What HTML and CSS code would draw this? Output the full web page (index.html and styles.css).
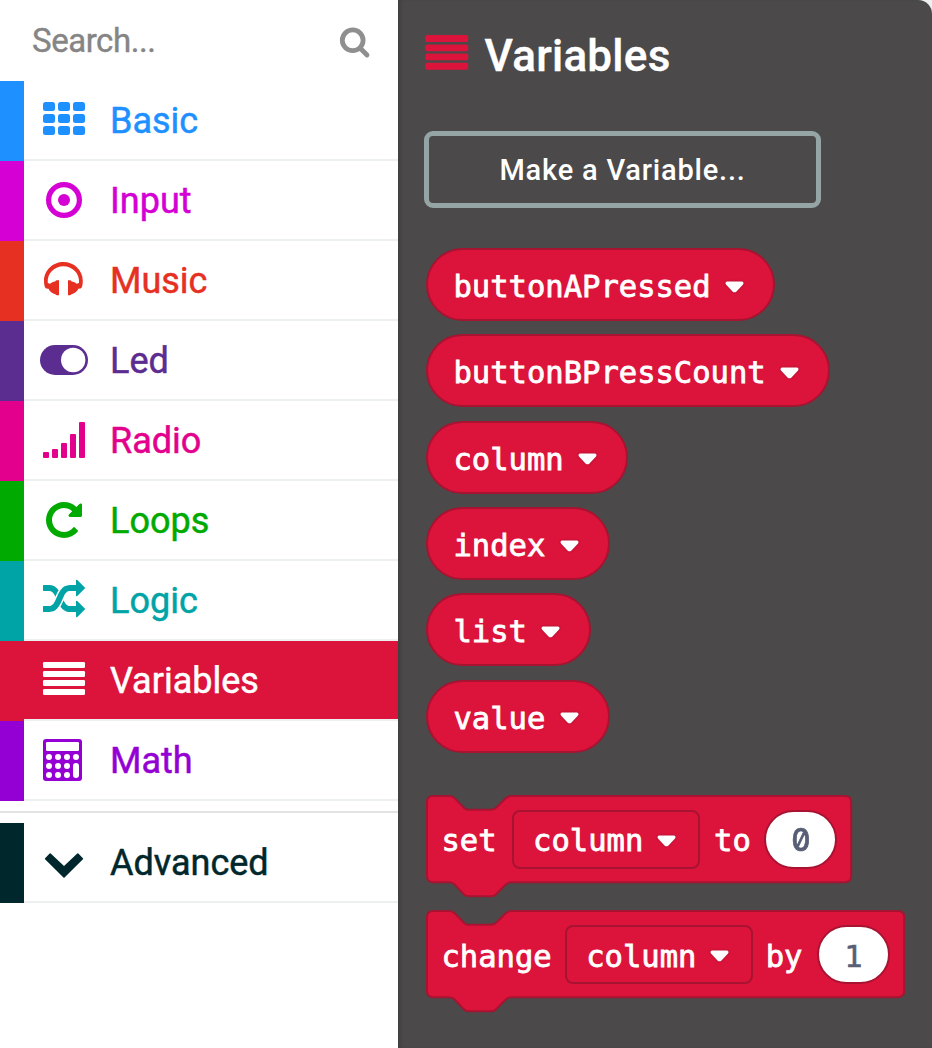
FILE: index.html
```html
<!DOCTYPE html>
<html lang="en">
<head>
<meta charset="utf-8">
<title>Blocks toolbox</title>
<link rel="stylesheet" href="styles.css">
</head>
<body>
<div class="editor">
  <nav class="toolbox">
    <div class="search">
      <span class="search-text">Search...</span>
      <svg class="search-icon" viewBox="0 0 32 32"><circle cx="13.7" cy="13.3" r="10.4"/><path d="M21.5 21.5L28 28"/></svg>
    </div>
    <div class="row basic"><span class="bar"></span><div class="cell">
      <svg class="icon" viewBox="0 0 56 80"><rect x="7" y="21" width="12" height="9" rx="2.5"/><rect x="22" y="21" width="12" height="9" rx="2.5"/><rect x="37" y="21" width="12" height="9" rx="2.5"/><rect x="7" y="33" width="12" height="9" rx="2.5"/><rect x="22" y="33" width="12" height="9" rx="2.5"/><rect x="37" y="33" width="12" height="9" rx="2.5"/><rect x="7" y="45" width="12" height="9" rx="2.5"/><rect x="22" y="45" width="12" height="9" rx="2.5"/><rect x="37" y="45" width="12" height="9" rx="2.5"/></svg>
      <span class="label">Basic</span></div></div>
    <div class="row input"><span class="bar"></span><div class="cell">
      <svg class="icon" viewBox="0 0 56 80"><circle cx="28" cy="39" r="15.4" fill="none" stroke="currentColor" stroke-width="5.2"/><circle cx="28" cy="39" r="6"/></svg>
      <span class="label">Input</span></div></div>
    <div class="row music"><span class="bar"></span><div class="cell">
      <svg class="icon" viewBox="0 0 56 80"><path d="M10.200 47.600L8.900 46.200C8.200 44 8 42 8 40C8 29 17 21 27.400 21C38 21 46.800 29 46.800 40C46.800 42 46.600 44 45.900 46.200L44.600 47.600L42.300 47.800C41 50.600 38.600 52.600 35.300 53.200C35 54.200 34.200 54.300 32 54.200V39.300C34.200 39 35.300 39.400 35.600 40.500C37.800 40.800 39.300 41.600 40.700 42.800L43 42C44 32 36 25.200 27.400 25.200C18.800 25.200 10.800 32 11.800 42L14.100 42.800C15.500 41.600 17 40.800 19.200 40.500C19.500 39.400 20.600 39 23 39.300V54.200C20.600 54.300 19.800 54.200 19.500 53.200C16.200 52.600 13.800 50.600 12.500 47.800Z"/></svg>
      <span class="label">Music</span></div></div>
    <div class="row led"><span class="bar"></span><div class="cell">
      <svg class="icon" viewBox="0 0 56 80"><rect x="4" y="24" width="48" height="30" rx="15"/><circle cx="37.200" cy="39" r="12.200" fill="#fff"/></svg>
      <span class="label">Led</span></div></div>
    <div class="row radio"><span class="bar"></span><div class="cell">
      <svg class="icon" viewBox="0 0 56 80"><rect x="7" y="51" width="6" height="6" rx="1"/><rect x="16" y="48" width="6" height="9" rx="1"/><rect x="25" y="42" width="6" height="15" rx="1"/><rect x="34" y="33" width="6" height="24" rx="1"/><rect x="43" y="21" width="6" height="36" rx="1"/></svg>
      <span class="label">Radio</span></div></div>
    <div class="row loops"><span class="bar"></span><div class="cell">
      <svg class="icon" viewBox="0 0 56 80"><path transform="translate(7 18) scale(.0234375)" d="M1664 256v448q0 26-19 45t-45 19h-448q-42 0-59-40-17-39 14-69l138-138q-148-137-349-137-104 0-198.500 40.500t-163.500 109.500-109.500 163.500-40.500 198.500 40.500 198.500 109.500 163.500 163.500 109.500 198.500 40.500q119 0 225-52t179-147q7-10 23-12 15 0 25 9l137 138q9 8 9.500 20.500t-7.500 22.500q-109 132-264 204.500t-327 72.500q-156 0-298-61t-245-164-164-245-61-298 61-298 164-245 245-164 298-61q147 0 284.500 55.500t244.500 156.500l130-129q29-31 70-14 39 17 39 59z"/></svg>
      <span class="label">Loops</span></div></div>
    <div class="row logic"><span class="bar"></span><div class="cell">
      <svg class="icon" viewBox="0 0 56 80"><path transform="translate(7 18) scale(.0234375)" d="M666 481q-60 92-137 273-22-45-37-72.500t-40.500-63.500-51-56.500-63-35-81.500-14.500h-224q-14 0-23-9t-9-23v-192q0-14 9-23t23-9h224q250 0 410 225zm1126 799q0 14-9 23l-320 320q-9 9-23 9-13 0-22.500-9.500t-9.500-22.500v-192q-32 0-85 .5t-81 1-73-1-71-5-64-10.500-63-18.500-58-28.500-59-40-55-53.500-56-69.500q59-93 136-273 22 45 37 72.500t40.500 63.500 51 56.500 63 35 81.500 14.500h256v-192q0-14 9-23t23-9q12 0 24 10l319 319q9 9 9 23zm0-896q0 14-9 23l-320 320q-9 9-23 9-13 0-22.500-9.500t-9.500-22.500v-192h-256q-48 0-87 15t-69 45-51 61.500-45 77.500q-32 62-78 171-29 66-49.500 111t-54 105-64 100-74 83-90 68.500-106.500 42-128 16.500h-224q-14 0-23-9t-9-23v-192q0-14 9-23t23-9h224q48 0 87-15t69-45 51-61.500 45-77.500q32-62 78-171 29-66 49.500-111t54-105 64-100 74-83 90-68.500 106.500-42 128-16.500h256v-192q0-14 9-23t23-9q12 0 24 10l319 319q9 9 9 23z"/></svg>
      <span class="label">Logic</span></div></div>
    <div class="row variables selected"><span class="bar"></span><div class="cell">
      <svg class="icon" viewBox="0 0 56 80"><rect x="7" y="21" width="42" height="6" rx="1.200"/><rect x="7" y="30" width="42" height="6" rx="1.200"/><rect x="7" y="39" width="42" height="6" rx="1.200"/><rect x="7" y="48" width="42" height="6" rx="1.200"/></svg>
      <span class="label">Variables</span></div></div>
    <div class="row math"><span class="bar"></span><div class="cell">
      <svg class="icon" viewBox="0 0 56 80"><rect x="7" y="18" width="39" height="42" rx="3"/><g fill="#fff"><rect x="10" y="21" width="33" height="9" rx="1.200"/><circle cx="13" cy="36" r="3"/><circle cx="22" cy="36" r="3"/><circle cx="31" cy="36" r="3"/><circle cx="40" cy="36" r="3"/><circle cx="13" cy="45" r="3"/><circle cx="22" cy="45" r="3"/><circle cx="31" cy="45" r="3"/><circle cx="13" cy="54" r="3"/><circle cx="22" cy="54" r="3"/><circle cx="31" cy="54" r="3"/><rect x="37" y="42" width="6" height="15" rx="3"/></g></svg>
      <span class="label">Math</span></div></div>
    <div class="divider"></div>
    <div class="row advanced"><span class="bar"></span><div class="cell">
      <svg class="icon" viewBox="0 0 56 80"><path stroke="currentColor" stroke-width="1.500" stroke-linejoin="round" d="M14.200 31.100L28 44.100L41.800 31.100L46.400 35.700L28 53.900L9.600 35.700Z"/></svg>
      <span class="label">Advanced</span></div></div>
  </nav>

  <main class="flyout">
    <h1 class="heading">
      <svg class="heading-icon" viewBox="0 0 43 35"><rect y="0" width="43" height="7" rx="2"/><rect y="9.500" width="43" height="6.700" rx="2"/><rect y="18.600" width="43" height="6.700" rx="2"/><rect y="27.800" width="43" height="6.900" rx="2"/></svg>
      <span>Variables</span>
    </h1>
    <button class="make">Make a Variable...</button>

    <div class="pills">
      <div class="pill"><span>buttonAPressed</span><svg class="caret" viewBox="0 0 19 12"><path d="M2 .5H17Q18.500 .5 18.500 2.200Q18.500 3 17.800 3.800L11.500 10.400Q9.500 12.200 7.500 10.400L1.200 3.800Q.5 3 .5 2.200Q.5 .5 2 .5Z"/></svg></div>
      <div class="pill"><span>buttonBPressCount</span><svg class="caret" viewBox="0 0 19 12"><path d="M2 .5H17Q18.500 .5 18.500 2.200Q18.500 3 17.800 3.800L11.500 10.400Q9.500 12.200 7.500 10.400L1.200 3.800Q.5 3 .5 2.200Q.5 .5 2 .5Z"/></svg></div>
      <div class="pill"><span>column</span><svg class="caret" viewBox="0 0 19 12"><path d="M2 .5H17Q18.500 .5 18.500 2.200Q18.500 3 17.800 3.800L11.500 10.400Q9.500 12.200 7.500 10.400L1.200 3.800Q.5 3 .5 2.200Q.5 .5 2 .5Z"/></svg></div>
      <div class="pill"><span>index</span><svg class="caret" viewBox="0 0 19 12"><path d="M2 .5H17Q18.500 .5 18.500 2.200Q18.500 3 17.800 3.800L11.500 10.400Q9.500 12.200 7.500 10.400L1.200 3.800Q.5 3 .5 2.200Q.5 .5 2 .5Z"/></svg></div>
      <div class="pill"><span>list</span><svg class="caret" viewBox="0 0 19 12"><path d="M2 .5H17Q18.500 .5 18.500 2.200Q18.500 3 17.800 3.800L11.500 10.400Q9.500 12.200 7.500 10.400L1.200 3.800Q.5 3 .5 2.200Q.5 .5 2 .5Z"/></svg></div>
      <div class="pill"><span>value</span><svg class="caret" viewBox="0 0 19 12"><path d="M2 .5H17Q18.500 .5 18.500 2.200Q18.500 3 17.800 3.800L11.500 10.400Q9.500 12.200 7.500 10.400L1.200 3.800Q.5 3 .5 2.200Q.5 .5 2 .5Z"/></svg></div>
    </div>

    <div class="statements">
      <div class="block">
        <svg class="block-shape" width="428" height="103"><path d="M1 7Q1 1 7 1H23Q26.500 1 29 3.500L37 11.800Q39.500 14.800 43 14.800H65Q68.500 14.800 71 12L79.500 3.500Q82 1 85.500 1H418.500Q425.200 1 425.200 7V81Q425.200 87.200 418.500 87.200H85.500Q82 87.200 79.500 89.700L71 98.300Q68.500 101.200 65 101.200H43Q39.500 101.200 37 98.300L29 89.700Q26.500 87.200 23 87.200H7Q1 87.200 1 81Z"/></svg>
        <div class="fields"><span class="word">set</span><div class="dropdown"><span>column</span><svg class="caret" viewBox="0 0 19 12"><path d="M2 .5H17Q18.500 .5 18.500 2.200Q18.500 3 17.800 3.800L11.500 10.400Q9.500 12.200 7.500 10.400L1.200 3.800Q.5 3 .5 2.200Q.5 .5 2 .5Z"/></svg></div><span class="word">to</span><span class="number"><span class="zero">0</span></span></div>
      </div>
      <div class="block">
        <svg class="block-shape" width="481" height="103"><path d="M1 7Q1 1 7 1H23Q26.500 1 29 3.500L37 11.800Q39.500 14.800 43 14.800H65Q68.500 14.800 71 12L79.500 3.500Q82 1 85.500 1H471.500Q478.200 1 478.200 7V81Q478.200 87.200 471.500 87.200H85.500Q82 87.200 79.500 89.700L71 98.300Q68.500 101.200 65 101.200H43Q39.500 101.200 37 98.300L29 89.700Q26.500 87.200 23 87.200H7Q1 87.200 1 81Z"/></svg>
        <div class="fields change"><span class="word">change</span><div class="dropdown"><span>column</span><svg class="caret" viewBox="0 0 19 12"><path d="M2 .5H17Q18.500 .5 18.500 2.200Q18.500 3 17.800 3.800L11.500 10.400Q9.500 12.200 7.500 10.400L1.200 3.800Q.5 3 .5 2.200Q.5 .5 2 .5Z"/></svg></div><span class="word">by</span><span class="number">1</span></div>
      </div>
    </div>
  </main>
</div>
</body>
</html>
```

FILE: styles.css
```css
* { box-sizing: border-box; }
body { margin: 0; font-family: Roboto, sans-serif; background: #ecf0f1; }
.editor { display: flex; width: 932px; height: 1048px; overflow: hidden; }

.toolbox { width: 398px; flex: none; background: #fff; }
.search { height: 81px; padding: 0 27px 0 32px; display: flex; justify-content: space-between; align-items: center; color: #858585; }
.search-text { font-size: 33px; line-height: 81px; letter-spacing: -0.45px; -webkit-text-stroke: 0.4px currentColor; }
.search-icon { width: 32px; height: 32px; margin-top: 5px; fill: none; stroke: #8f8f8f; stroke-width: 4.8; stroke-linecap: round; }

.row { display: flex; height: 80px; }
.bar { width: 24px; background: currentColor; }
.cell { flex: 1; display: flex; border-bottom: 2px solid #ecf0f1; padding-left: 12px; }
.icon { width: 56px; height: 80px; flex: none; fill: currentColor; }
.label { margin-left: 18px; font-size: 36px; line-height: 80px; height: 78px; -webkit-text-stroke: 0.5px currentColor; }
.basic { color: #1e90ff; }
.input { color: #d400d4; }
.music { color: #e63022; }
.led { color: #5c2d91; }
.radio { color: #e3008c; }
.loops { color: #00aa00; }
.logic { color: #00a4a6; }
.variables { color: #dc143c; }
.math { color: #9400d3; }
.advanced { color: #00272b; }
.selected .cell { background: #dc143c; color: #fff; }
.divider { height: 2px; margin: 10px 0; background: #e2e3e4; }

.flyout { flex: 1; background: #4b4949; border-top-right-radius: 14px; padding: 27px 0 0 26px; box-shadow: inset 4px 0 4px -2px rgba(0, 0, 0, .18); }
.heading { margin: 0 0 0 1px; height: 54px; display: flex; align-items: center; gap: 16px; color: #fff; font-weight: 500; font-size: 44px; line-height: 54px; letter-spacing: 0.25px; -webkit-text-stroke: 0.4px currentColor; }
.heading span { padding-top: 3px; }
.heading-icon { width: 43.5px; height: 35px; fill: #dc143c; margin-top: -3px; }
.make { display: block; margin-top: 50px; width: 397px; height: 77px; border: 5.5px solid #95a5a6; border-radius: 9px; background: none; color: #fff; font: 500 29px/66px Roboto, sans-serif; letter-spacing: 0.8px; padding: 0; }

.pills { margin: 40px 0 0 2px; display: flex; flex-direction: column; align-items: flex-start; gap: 13.35px; }
.pill { display: flex; align-items: center; height: 73px; padding: 4px 29px 0 25.5px; border: 2px solid #a81331; border-radius: 37px; background: #dc143c; }
.pill, .fields { color: #fff; font-family: "DejaVu Sans Mono", monospace; font-size: 30.5px; -webkit-text-stroke: 0.8px currentColor; }
.caret { width: 19px; height: 12px; margin-left: 14.5px; fill: #fff; -webkit-text-stroke: 0; filter: drop-shadow(0 0 1px rgba(90, 0, 20, .5)); }

.statements { margin: 42px 0 0 2px; display: flex; flex-direction: column; gap: 28.3px; }
.block { position: relative; height: 87px; }
.block-shape { position: absolute; left: 0; top: 0; fill: #dc143c; stroke: #a81331; stroke-width: 2; }
.fields { position: relative; display: flex; align-items: center; height: 89px; padding-left: 15.5px; }
.word { padding-top: 3px; }
.dropdown { display: flex; align-items: center; width: 188px; height: 59px; margin: 0 14px 0 15.5px; padding: 3px 0 0 19px; border: 2px solid #a81331; border-radius: 8px; }
.dropdown .caret { margin-left: 14px; }
.number { width: 73px; height: 59px; margin-left: 13.5px; border: 2px solid #a81331; border-radius: 30px; background: #fff; color: #575e75; line-height: 57px; text-align: center; -webkit-text-stroke-width: 0.5px; }
.zero { display: inline-block; font-family: Inter, sans-serif; font-weight: 500; font-size: 31px; line-height: 55px; font-feature-settings: "zero"; transform: scaleX(.94); -webkit-text-stroke-width: 0.7px; }
.change .dropdown { margin: 0 12.5px 0 13.5px; }
.change .number { margin-left: 14.5px; line-height: 59px; }
```
